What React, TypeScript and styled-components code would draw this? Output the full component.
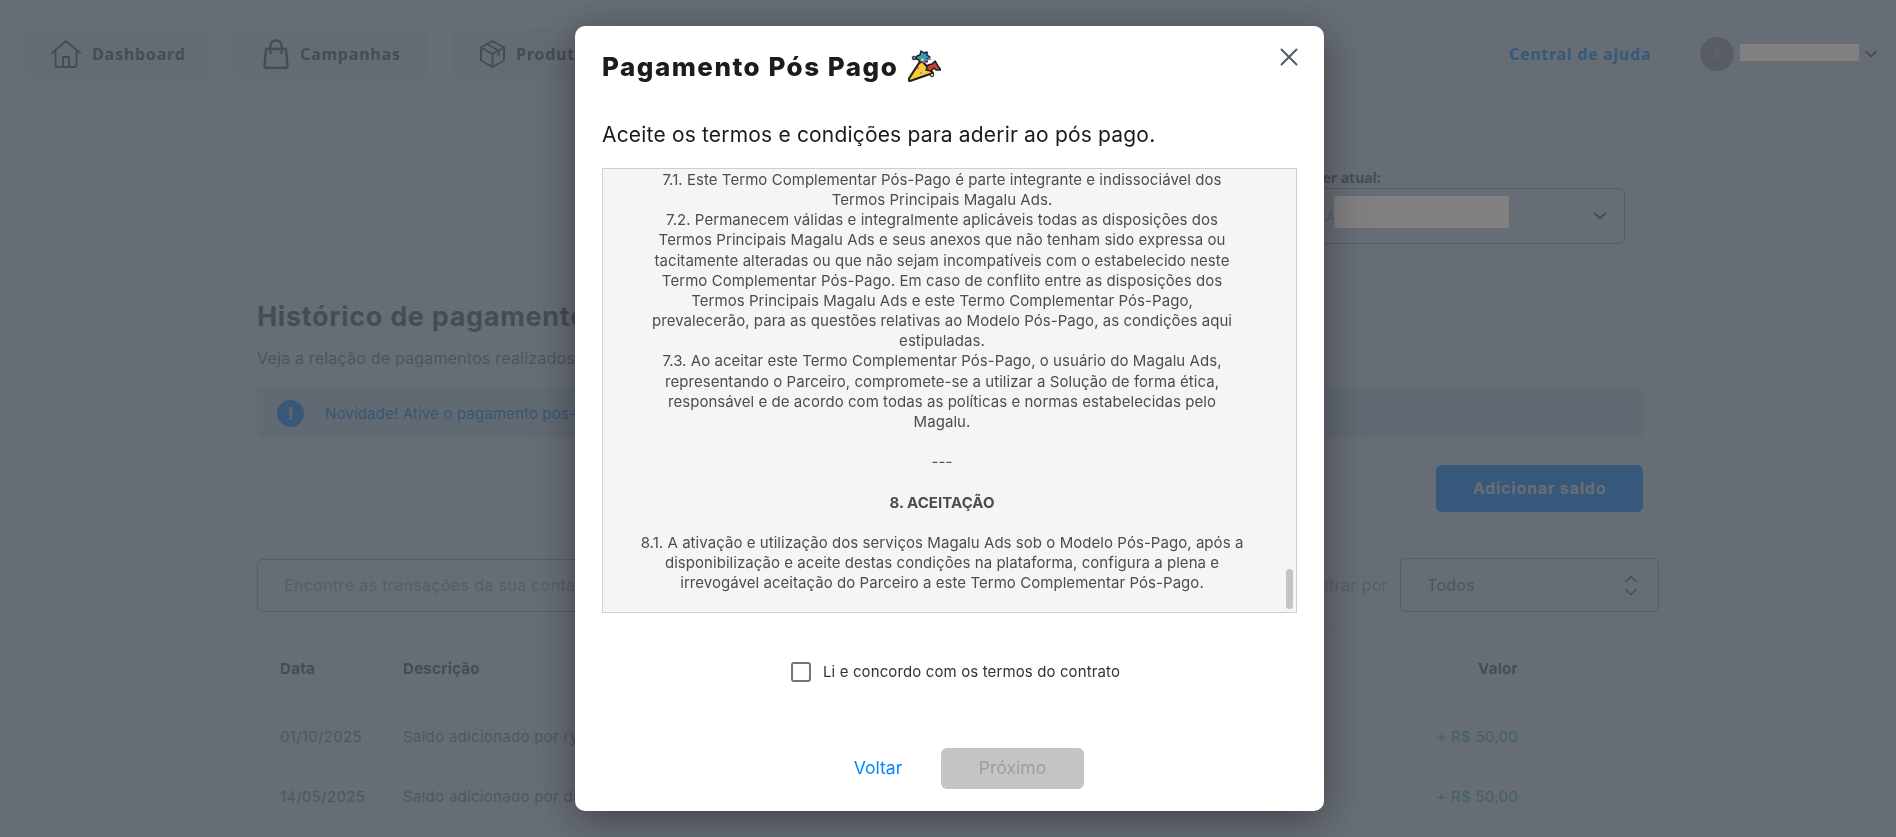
import styled, { createGlobalStyle } from "styled-components";
import { ChevronDown, ChevronUp, X } from "lucide-react";

const GlobalStyle = createGlobalStyle`
  html, body {
    margin: 0;
    padding: 0;
    height: 100%;
    overflow: hidden;
    background: #f0ebdc;
  }
  * { box-sizing: border-box; }
`;

const dark = "#524841";
const muted = "#a89c90";
const line = "#a39a90";
const blue = "#0284ff";

const Page = styled.div`
  height: 837px;
  overflow: hidden;
  position: relative;
  background: #f0ebdc;
  font-family: "Inter", sans-serif;
  color: ${dark};
`;

const Header = styled.header`
  display: flex;
  align-items: center;
  padding: 29px 15px 0 23px;
`;

const Tab = styled.div<{ $w: number; $pad: number }>`
  width: ${(p) => p.$w}px;
  height: 49px;
  margin-right: 23px;
  padding-left: ${(p) => p.$pad}px;
  display: flex;
  align-items: center;
  gap: 11px;
  border-radius: 6px;
  background: rgba(0, 0, 0, 0.035);
  font: 700 16px "Noto Sans", sans-serif;
  letter-spacing: 0.8px;
  flex: none;
`;

const HeaderRight = styled.div`
  margin-left: auto;
  display: flex;
  align-items: center;
`;

const HelpLink = styled.a`
  font: 700 16px "Noto Sans", sans-serif;
  letter-spacing: 0.7px;
  color: ${blue};
  margin-right: 49px;
`;

const Avatar = styled.div`
  width: 34px;
  height: 34px;
  border-radius: 50%;
  background: #a89c8e;
  color: #c4bab0;
  font: 700 14px "Noto Sans", sans-serif;
  display: flex;
  align-items: center;
  justify-content: center;
  margin-right: 5px;
`;

const UserName = styled.div`
  width: 119px;
  font: 400 14px "Inter", sans-serif;
  margin-right: 3px;
`;

const SellerBlock = styled.section`
  width: 327px;
  margin: 90px 0 0 1298px;
`;

const SellerLabel = styled.div`
  height: 20px;
  font: 700 14px/20px "Noto Sans", sans-serif;
`;

const SellerSelect = styled.div`
  height: 56px;
  border: 1px solid ${line};
  border-radius: 6px;
  padding: 0 14px 0 14px;
  display: flex;
  align-items: center;
  justify-content: space-between;
  font-size: 14px;
  color: ${muted};
`;

const Main = styled.main`
  padding: 56px 253px 0 257px;
`;

const Title = styled.h2`
  margin: 0;
  font: 700 27px/34px "Inter", sans-serif;
  letter-spacing: 0.7px;
  color: ${dark};
`;

const Sub = styled.p`
  margin: 13px 0 0;
  font: 400 16px/22px "Inter", sans-serif;
  letter-spacing: 0.2px;
  color: #7a6e63;
`;

const Alert = styled.div`
  margin-top: 19px;
  height: 50px;
  padding-left: 20px;
  display: flex;
  align-items: center;
  gap: 21px;
  border-radius: 5px;
  background: rgba(0, 30, 140, 0.1);
  color: #0a7ad8;
  font-size: 15px;
  letter-spacing: 0.15px;
`;

const AlertIcon = styled.span`
  width: 27px;
  height: 27px;
  border-radius: 50%;
  background: #0a84e8;
  color: #c7c8cc;
  display: flex;
  align-items: center;
  justify-content: center;
  font: 800 18px "Inter", sans-serif;
`;

const ActionRow = styled.div`
  margin-top: 27px;
  display: flex;
  justify-content: flex-end;
`;

const AddButton = styled.button`
  width: 207px;
  height: 47px;
  padding: 0 0 2px;
  border: 0;
  border-radius: 6px;
  background: ${blue};
  color: #f0ebdc;
  font: 700 16px "Inter", sans-serif;
  letter-spacing: 0.8px;
`;

const Toolbar = styled.div`
  margin: 46px -16px 0 0;
  display: flex;
  align-items: center;
  gap: 12px;
`;

const Search = styled.div`
  flex: 1;
  height: 53px;
  border: 1px solid ${line};
  border-radius: 6px;
  padding-left: 26px;
  display: flex;
  align-items: center;
  font-size: 16px;
  letter-spacing: 0.35px;
  color: ${muted};
`;

const FilterLabel = styled.span`
  font-size: 16px;
  letter-spacing: 0.35px;
  color: ${muted};
`;

const FilterSelect = styled.div`
  width: 259px;
  height: 54px;
  border: 1px solid ${line};
  border-radius: 6px;
  padding: 0 17px 0 26px;
  display: flex;
  align-items: center;
  justify-content: space-between;
  font-size: 16px;
  letter-spacing: 0.3px;
  color: #7a6e63;
`;

const Stepper = styled.span`
  display: flex;
  flex-direction: column;
  align-items: center;
  color: ${dark};

  svg + svg {
    margin-top: -7px;
  }
`;

const Card = styled.section`
  margin-top: 18px;
  border: 1px solid rgba(0, 0, 0, 0.03);
  border-radius: 6px;
  padding: 0 124px 0 22px;
`;

const Row = styled.div<{ $head?: boolean }>`
  height: ${(p) => (p.$head ? 75 : 60)}px;
  display: grid;
  grid-template-columns: 123px 1fr auto;
  align-items: center;
  font-size: 15px;
  letter-spacing: 0.3px;
  font-weight: ${(p) => (p.$head ? 700 : 400)};
  color: ${(p) => (p.$head ? dark : "#85796e")};
`;

const Amount = styled.span`
  color: #3cb45a;
`;

const Overlay = styled.div`
  position: fixed;
  inset: 0;
  background: rgba(67, 77, 90, 0.8);
`;

const Redaction = styled.div<{ $x: number; $y: number; $w: number; $h: number }>`
  position: fixed;
  left: ${(p) => p.$x}px;
  top: ${(p) => p.$y}px;
  width: ${(p) => p.$w}px;
  height: ${(p) => p.$h}px;
  background: #808080;
`;

const Modal = styled.div`
  position: fixed;
  top: 26px;
  left: 575px;
  width: 749px;
  height: 785px;
  background: #fff;
  border-radius: 10px;
  padding: 24px 27px 0;
  box-shadow: 0 8px 40px rgba(0, 0, 0, 0.4);
  display: flex;
  flex-direction: column;
  font-family: "Inter", sans-serif;
`;

const ModalTitle = styled.h1`
  margin: 0;
  height: 34px;
  display: flex;
  align-items: center;
  gap: 10px;
  font: 800 26px/34px "Inter", sans-serif;
  letter-spacing: 1.5px;
  color: #1c1c1c;
`;

const HatSlot = styled.span`
  display: flex;
  margin-top: -3px;
`;

const CloseButton = styled.button`
  position: absolute;
  top: 16px;
  right: 20px;
  width: 30px;
  height: 30px;
  padding: 0;
  border: 0;
  background: none;
  color: #4f5b66;
  display: flex;
`;

const ModalSub = styled.p`
  margin: 37px 0 0;
  font: 400 21px/28px "Inter", sans-serif;
  letter-spacing: 0.18px;
  color: #1c1c1c;
`;

const Terms = styled.div`
  position: relative;
  margin-top: 19px;
  height: 445px;
  flex: none;
  overflow: hidden;
  border: 1px solid #cfcfcf;
  background: #f5f5f5;
  padding: 1px 15px 0 0;
  text-align: center;
  font-size: 15px;
  letter-spacing: 0.05px;
  line-height: 20.16px;
  color: #4d4d4d;
`;

const TermsLine = styled.div<{ $bold?: boolean }>`
  height: 20.16px;
  white-space: nowrap;
  font-weight: ${(p) => (p.$bold ? 700 : 400)};
`;

const ScrollThumb = styled.div`
  position: absolute;
  top: 400px;
  right: 3px;
  width: 7px;
  height: 40px;
  border-radius: 4px;
  background: #c4c4c4;
`;

const AcceptRow = styled.label`
  margin-top: 48px;
  padding-left: 12px;
  height: 20px;
  display: flex;
  align-items: center;
  justify-content: center;
  gap: 12px;
  font-size: 15px;
  letter-spacing: 0.12px;
  color: #333;
`;

const CheckBox = styled.span`
  width: 20px;
  height: 20px;
  margin-top: 1px;
  border: 2px solid #757575;
  border-radius: 3px;
`;

const Footer = styled.div`
  margin-top: 67px;
  display: flex;
  justify-content: center;
`;

const BackButton = styled.button`
  width: 126px;
  height: 41px;
  padding: 0 0 3px;
  border: 0;
  background: none;
  color: #0086ff;
  font: 400 17.6px "Inter", sans-serif;
`;

const NextButton = styled.button`
  width: 143px;
  height: 41px;
  padding: 0 0 3px;
  border: 0;
  border-radius: 6px;
  background: #c4c4c4;
  color: #9e9e9e;
  font: 400 17.6px "Inter", sans-serif;
`;

const HomeIcon = () => (
  <svg width="30" height="28" viewBox="0 0 30 28" fill="none" stroke="currentColor" strokeWidth="2" strokeLinejoin="round" strokeLinecap="round">
    <path d="M1 13 15 1l14 12" />
    <path d="M4.5 11v14.5q0 1.5 1.5 1.5h18q1.500 0 1.500-1.500V11" />
    <path d="M12 27V17h6v10" />
  </svg>
);

const BagIcon = () => (
  <svg width="26" height="30" viewBox="0 0 26 30" fill="none" stroke="currentColor" strokeWidth="2.4" strokeLinejoin="round" strokeLinecap="round">
    <path d="M3 10h20l1.500 17q0 2-2 2H3.500q-2 0-2-2L3 10Z" />
    <path d="M7.500 14V7q0-5.500 5.500-5.500T18.500 7v7" />
  </svg>
);

const BoxIcon = () => (
  <svg width="25" height="28" viewBox="0 0 25 28" fill="none" stroke="currentColor" strokeWidth="2" strokeLinejoin="round" strokeLinecap="round">
    <path d="M12.500 1 24 7.500v13L12.500 27 1 20.500v-13L12.500 1Z" />
    <path d="M1 7.500 12.500 14 24 7.500M12.500 14v13" />
    <path d="M7 4l11.500 6.500V15" />
  </svg>
);

const PartyIcon = () => (
  <svg width="33" height="33" viewBox="0 0 33 33" fill="none">
    <path d="M1 29.500Q0 33 3.500 31.500L25 24 13 11 1 29.500Z" fill="#fcc93c" stroke="#222" strokeWidth="2.2" strokeLinejoin="round" />
    <path d="M9 7l3-1 1-4 3 2 3-1 0 3 3 2-3 2 0 3-4-1-3 2-1-3-3-1Z" fill="#2a9dbe" stroke="#222" strokeWidth="1.500" strokeLinejoin="round" />
    <path d="M18 21l2-5 4-1 3-3 3 5 3 4-5 0-2-2-3 3Z" fill="#c8402f" stroke="#222" strokeWidth="1.500" strokeLinejoin="round" />
    <path d="M15 14q3-4 8-4" stroke="#8a63d2" strokeWidth="1.600" />
    <circle cx="14.500" cy="11" r="1.500" fill="#f5d33c" />
    <circle cx="6" cy="9" r="1.800" fill="#8a63d2" stroke="#222" />
    <circle cx="24" cy="26" r="1.800" fill="#f5d33c" stroke="#222" />
    <circle cx="10" cy="19" r="1" fill="#f0553c" />
    <circle cx="13" cy="24" r="1" fill="#3ab5c8" />
  </svg>
);

const termsLines = [
  "7.1. Este Termo Complementar Pós-Pago é parte integrante e indissociável dos",
  "Termos Principais Magalu Ads.",
  "7.2. Permanecem válidas e integralmente aplicáveis todas as disposições dos",
  "Termos Principais Magalu Ads e seus anexos que não tenham sido expressa ou",
  "tacitamente alteradas ou que não sejam incompatíveis com o estabelecido neste",
  "Termo Complementar Pós-Pago. Em caso de conflito entre as disposições dos",
  "Termos Principais Magalu Ads e este Termo Complementar Pós-Pago,",
  "prevalecerão, para as questões relativas ao Modelo Pós-Pago, as condições aqui",
  "estipuladas.",
  "7.3. Ao aceitar este Termo Complementar Pós-Pago, o usuário do Magalu Ads,",
  "representando o Parceiro, compromete-se a utilizar a Solução de forma ética,",
  "responsável e de acordo com todas as políticas e normas estabelecidas pelo",
  "Magalu.",
  "\u00a0",
  "---",
  "\u00a0",
  "**8. ACEITAÇÃO",
  "\u00a0",
  "8.1. A ativação e utilização dos serviços Magalu Ads sob o Modelo Pós-Pago, após a",
  "disponibilização e aceite destas condições na plataforma, configura a plena e",
  "irrevogável aceitação do Parceiro a este Termo Complementar Pós-Pago.",
];

export default function App() {
  return (
    <Page>
      <GlobalStyle />
      <Header>
        <Tab $w={187} $pad={28}>
          <HomeIcon />
          Dashboard
        </Tab>
        <Tab $w={195} $pad={30}>
          <BagIcon />
          Campanhas
        </Tab>
        <Tab $w={190} $pad={29}>
          <BoxIcon />
          Produtos
        </Tab>
        <HeaderRight>
          <HelpLink>Central de ajuda</HelpLink>
          <Avatar>R</Avatar>
          <UserName>&nbsp;</UserName>
          <ChevronDown size={20} strokeWidth={2.2} />
        </HeaderRight>
      </Header>

      <SellerBlock>
        <SellerLabel>Seller atual:</SellerLabel>
        <SellerSelect>
          MALU
          <ChevronDown size={20} strokeWidth={2.2} color={dark} />
        </SellerSelect>
      </SellerBlock>

      <Main>
        <Title>Histórico de pagamentos</Title>
        <Sub>Veja a relação de pagamentos realizados</Sub>
        <Alert>
          <AlertIcon>!</AlertIcon>
          Novidade! Ative o pagamento pós-pago
        </Alert>
        <ActionRow>
          <AddButton>Adicionar saldo</AddButton>
        </ActionRow>
        <Toolbar>
          <Search>Encontre as transações da sua conta</Search>
          <FilterLabel>Filtrar por</FilterLabel>
          <FilterSelect>
            Todos
            <Stepper>
              <ChevronUp size={20} strokeWidth={1.8} />
              <ChevronDown size={20} strokeWidth={1.8} />
            </Stepper>
          </FilterSelect>
        </Toolbar>
        <Card>
          <Row $head>
            <span>Data</span>
            <span>Descrição</span>
            <span>Valor</span>
          </Row>
          <Row>
            <span>01/10/2025</span>
            <span>Saldo adicionado por ryan</span>
            <Amount>+ R$ 50,00</Amount>
          </Row>
          <Row>
            <span>14/05/2025</span>
            <span>Saldo adicionado por diego</span>
            <Amount>+ R$ 50,00</Amount>
          </Row>
        </Card>
      </Main>

      <Overlay />
      <Redaction $x={1740} $y={44} $w={119} $h={17} />
      <Redaction $x={1334} $y={196} $w={175} $h={32} />

      <Modal>
        <ModalTitle>
          Pagamento Pós Pago
          <HatSlot>
            <PartyIcon />
          </HatSlot>
        </ModalTitle>
        <CloseButton aria-label="Fechar">
          <X size={30} strokeWidth={1.6} />
        </CloseButton>
        <ModalSub>Aceite os termos e condições para aderir ao pós pago.</ModalSub>
        <Terms>
          {termsLines.map((text, i) =>
            text.startsWith("**") ? (
              <TermsLine key={i} $bold>
                {text.slice(2)}
              </TermsLine>
            ) : (
              <TermsLine key={i}>{text}</TermsLine>
            )
          )}
          <ScrollThumb />
        </Terms>
        <AcceptRow>
          <CheckBox />
          Li e concordo com os termos do contrato
        </AcceptRow>
        <Footer>
          <BackButton>Voltar</BackButton>
          <NextButton disabled>Próximo</NextButton>
        </Footer>
      </Modal>
    </Page>
  );
}
